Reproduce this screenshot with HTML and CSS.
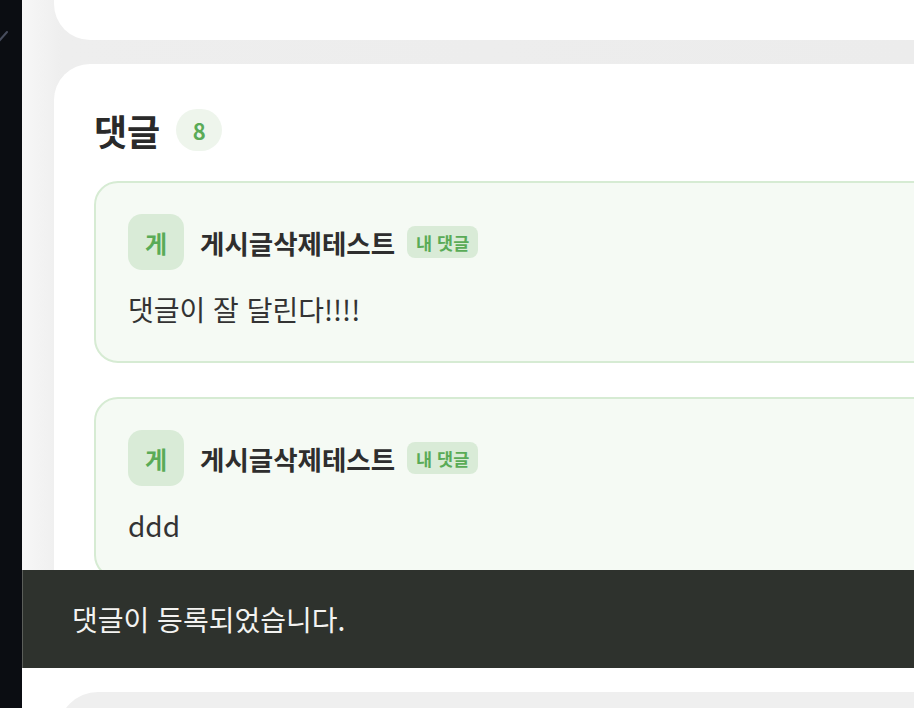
FILE: index.html
```html
<!DOCTYPE html>
<html lang="ko">
<head>
    <meta charset="UTF-8">
    <meta name="viewport" content="width=device-width, initial-scale=1.0">
    <title>댓글</title>
    <link rel="stylesheet" href="styles.css">
</head>
<body>
    <aside class="sidebar">
        <svg class="sidebar-mark" width="10" height="14" viewBox="0 0 10 14">
            <path d="M-1 12 L7 3" stroke="#474c5c" stroke-width="2" stroke-linecap="round" fill="none"/>
        </svg>
    </aside>

    <main class="main">
        <section class="card card-top"></section>

        <section class="card comments">
            <div class="comments-head">
                <h2>댓글</h2>
                <span class="count">8</span>
            </div>

            <div class="comment">
                <div class="comment-head">
                    <div class="avatar">게</div>
                    <span class="author">게시글삭제테스트</span>
                    <span class="mine">내 댓글</span>
                </div>
                <p class="comment-body">댓글이 잘 달린다!!!!</p>
            </div>

            <div class="comment">
                <div class="comment-head">
                    <div class="avatar">게</div>
                    <span class="author">게시글삭제테스트</span>
                    <span class="mine">내 댓글</span>
                </div>
                <p class="comment-body">ddd</p>
            </div>
        </section>
    </main>

    <div class="write-bar">
        <div class="write-input"></div>
    </div>

    <div class="toast">댓글이 등록되었습니다.</div>
</body>
</html>
```

FILE: styles.css
```css
html, body {
    height: 100%;
}
body {
    margin: 0;
    display: flex;
    overflow: hidden;
    font-family: "Noto Sans CJK KR", "Noto Sans", sans-serif;
    color: #2d2d2d;
    background: #ececec;
}
.sidebar {
    width: 22px;
    flex-shrink: 0;
    background: #0b0d12;
}
.sidebar-mark {
    display: block;
    margin-top: 29px;
}
.main {
    flex: 1;
    min-width: 0;
    padding-left: 32px;
    background: linear-gradient(to right, #f7f7f7 0, #eeeeee 40px, #ececec 100%);
}
.card {
    background: #fff;
    margin-right: -80px;
}
.card-top {
    height: 40px;
    border-radius: 0 0 0 36px;
}
.comments {
    margin-top: 24px;
    border-radius: 36px 0 0 36px;
    padding: 45px 40px 40px 40px;
}
.comments-head {
    display: flex;
    align-items: center;
    gap: 16px;
    margin-bottom: 30px;
}
.comments-head h2 {
    margin: 0;
    font-size: 36px;
    font-weight: 700;
    line-height: 42px;
    color: #2a2a2a;
}
.count {
    width: 46px;
    height: 42px;
    border-radius: 21px;
    background: #eef5ec;
    color: #5aab57;
    font-size: 22px;
    font-weight: 700;
    display: flex;
    align-items: center;
    justify-content: center;
}
.comment {
    background: #f5faf4;
    border: 2px solid #d6ebd3;
    border-radius: 24px;
    padding: 31px 32px;
    margin-bottom: 34px;
}
.comment-head {
    display: flex;
    align-items: center;
}
.avatar {
    width: 56px;
    height: 56px;
    border-radius: 14px;
    background: #d9ebd7;
    color: #5aab57;
    font-size: 24px;
    font-weight: 700;
    display: flex;
    align-items: center;
    justify-content: center;
    margin-right: 16px;
}
.author {
    font-size: 26.5px;
    font-weight: 700;
    color: #2e2e2e;
    margin-right: 12px;
}
.mine {
    height: 32px;
    padding: 0 9px;
    border-radius: 8px;
    background: #d9ebd7;
    color: #5aab57;
    font-size: 17.5px;
    font-weight: 700;
    display: flex;
    align-items: center;
}
.comment-body {
    margin: 18px 0 0 0;
    font-size: 28px;
    line-height: 42px;
    color: #333;
}
.write-bar {
    position: fixed;
    left: 22px;
    right: 0;
    bottom: 0;
    height: 40px;
    background: #fff;
    padding: 24px 0 0 36px;
    box-sizing: border-box;
    overflow: hidden;
}
.write-input {
    height: 80px;
    background: #efefef;
    border-radius: 40px 0 0 40px;
}
.toast {
    position: fixed;
    left: 22px;
    right: 0;
    bottom: 40px;
    height: 98px;
    background: #2e322d;
    border-left: 1px solid #5b5e5a;
    color: #f3f3f1;
    font-size: 28px;
    display: flex;
    align-items: center;
    padding-left: 49px;
}
```
